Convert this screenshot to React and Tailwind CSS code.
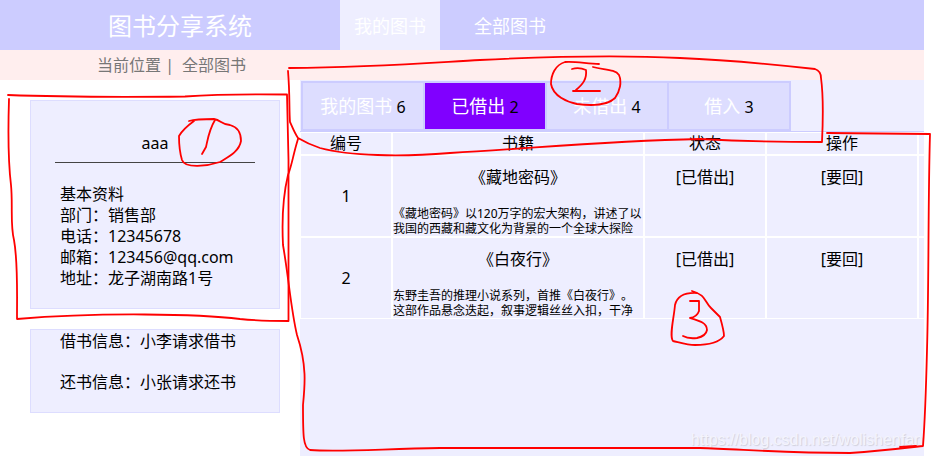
import React, { useState } from 'react';

const navItems = [
  { label: '我的图书', className: 'w-[100px] bg-[#eeeeff]' },
  { label: '全部图书', className: 'w-[140px]' },
];

const tabs = [
  { label: '我的图书', count: 6 },
  { label: '已借出', count: 2 },
  { label: '未借出', count: 4 },
  { label: '借入', count: 3 },
];

const profile = ['基本资料', '部门：销售部', '电话：12345678', '邮箱：123456@qq.com', '地址：龙子湖南路1号'];

const books = [
  {
    id: 1,
    title: '《藏地密码》',
    intro: '《藏地密码》以120万字的宏大架构，讲述了以我国的西藏和藏文化为背景的一个全球大探险',
  },
  {
    id: 2,
    title: '《白夜行》',
    intro: '东野圭吾的推理小说系列，首推《白夜行》。这部作品悬念迭起，叙事逻辑丝丝入扣，干净',
  },
];

// Pen strokes marking the three areas of the page
const frames = [
  'M8 95 C60 97 130 97 185 96.5 C220 94 250 94 287 94.5 L288.5 160 L288.5 321 C262 321 250 320 240 319 C200 314 100 312 17 319 C17 290 18 262 14 240 C10 225 13 205 11 185 C8 160 8 130 9 99',
  'M289 68 C380 67 440 62 480 60 C560 56 620 55 680 58 C730 60 770 64 815 69 Q821 71 821 78 Q824 100 822 142 C770 142 740 141 700 139 C600 141 540 148 450 153 C400 157 350 156 320 148 Q308 144 298 138 C294 132 292 126 290 122 C289 110 290 95 288 71',
  'M298 139 C293 155 292 165 288 175 C282 200 282 225 283 245 C289 280 291 310 297 335 C307 365 305 385 303 405 C303 435 303 448 310 450 C340 452 380 449 440 448 H700 C740 449 780 453 850 453 C880 451 905 448 923 446 C925 420 926 390 927 350 C929 280 928 200 930 134 L827 133',
  'M900 447 L916 446',
];

const marks = [
  // 1
  'M189 121 Q196 119 214 119 C221 120 222 125 230 125 C238 127 241 134 241 141 C239 152 228 157 220 162 C208 166 185 169 182 160 C179 150 179 143 179 136 Q183 129 194 121',
  'M215 120 C209 130 208 138 206 147 L202 154',
  // 2
  'M599 64 C588 64 575 61 565 62 C555 65 551 75 551 84 C553 96 567 102 577 104 C592 106 608 105 615 98 C620 91 622 82 619 75 C615 69 604 70 593 67',
  'M572 69 Q579 67 586 70 C587 79 583 84 576 90',
  'M573 91 H600',
  // 3
  'M692 291 C706 295 704 301 711 308 L720 317 C722 324 724 331 724 336 C718 344 706 345 695 345 C687 345 678 342 673 341 C669 336 674 318 675 305 Q678 292 697 293',
  'M690 301 H699 V311 Q697 317 690 318 C700 321 707 323 707 330 Q706 336 697 338 Q688 339 683 336',
];

const Header = () => (
  <header>
    <div className="flex h-[50px] bg-[#ccccff] text-white">
      <h1 className="w-[340px] pl-[108px] text-2xl leading-[52px]">图书分享系统</h1>
      <nav className="flex text-lg">
        {navItems.map((item) => (
          <a key={item.label} href="#" className={`text-center leading-[52px] ${item.className}`}>
            {item.label}
          </a>
        ))}
      </nav>
    </div>
    <div className="flex h-[30px] gap-2 bg-[#ffeeee] pl-[97px] leading-[30px] text-[#777777]">
      <span>当前位置 |</span>
      <span>全部图书</span>
    </div>
  </header>
);

const Sidebar = () => (
  <aside className="flex w-[300px] shrink-0 flex-col gap-5 py-5 pr-5 pl-[30px]">
    <section className="border border-[#ddddff] bg-[#eeeeff] px-6 pt-8 pb-[19px]">
      <h2 className="border-b border-[#444444] pb-2 text-center leading-[21px]">aaa</h2>
      <ul className="mt-[21px] pl-[5px] leading-[21px]">
        {profile.map((line) => (
          <li key={line}>{line}</li>
        ))}
      </ul>
    </section>
    <section className="flex flex-col gap-5 border border-[#ddddff] bg-[#eeeeff] pt-px pb-[19px] pl-[29px] leading-[21px]">
      <p>借书信息：小李请求借书</p>
      <p>还书信息：小张请求还书</p>
    </section>
  </aside>
);

const Tabs = ({ active, onChange }) => (
  <div className="flex border-b border-[#ccccff] pt-px pl-px">
    <div className="flex gap-0.5 border-2 border-[#ccccff] bg-[#ccccff]">
      {tabs.map((tab, i) => (
        <button
          key={tab.label}
          type="button"
          onClick={() => onChange(i)}
          className={`h-[46px] w-[120px] ${i === active ? 'bg-[#8000ff]' : 'bg-[#ddddff]'}`}
        >
          <span className="text-lg text-white">{tab.label}</span> {tab.count}
        </button>
      ))}
    </div>
  </div>
);

const BookTable = () => (
  <table className="w-full table-fixed border-separate border-spacing-0 text-center leading-[21px]">
    <colgroup>
      <col className="w-[92px]" />
      <col className="w-[252px]" />
      <col className="w-[122px]" />
      <col className="w-[152px]" />
      <col />
    </colgroup>
    <thead>
      <tr>
        {['编号', '书籍', '状态', '操作'].map((name) => (
          <th key={name} scope="col" className="border border-white p-0 font-normal">
            {name}
          </th>
        ))}
        <td className="border border-r-0 border-white p-0" />
      </tr>
    </thead>
    <tbody>
      {books.map((book) => (
        <tr key={book.id}>
          <td className="border border-white p-0">{book.id}</td>
          <td className="border border-white p-0">
            <h3 className="pt-[11px]">{book.title}</h3>
            <p className="mt-[18px] h-[30px] overflow-hidden text-left text-xs leading-[15px]">{book.intro}</p>
          </td>
          <td className="border border-white p-0 pt-[11px] align-top">[已借出]</td>
          <td className="border border-white p-0 pt-[11px] align-top">
            <a href="#">[要回]</a>
          </td>
          <td className="border border-r-0 border-white p-0" />
        </tr>
      ))}
    </tbody>
  </table>
);

const App = () => {
  const [active, setActive] = useState(1);

  return (
    <div className="relative min-h-screen overflow-hidden bg-white font-['Noto_Sans','Noto_Sans_CJK_SC',sans-serif] text-base text-black [text-spacing-trim:space-all]">
      <div className="mr-[7px] flex min-h-screen flex-col">
        <Header />
        <div className="flex flex-1">
          <Sidebar />
          <main className="min-w-0 flex-1 bg-[#eeeeff]">
            <Tabs active={active} onChange={setActive} />
            <BookTable />
          </main>
        </div>
      </div>

      <span className="absolute right-2 bottom-1 font-['Liberation_Sans',sans-serif] text-base text-[#f4f4fc] [text-shadow:1px_1px_1px_#d0d0dc]">
        https://blog.csdn.net/wolishenfan
      </span>
      <svg
        className="pointer-events-none absolute top-0 left-0"
        width="931"
        height="456"
        viewBox="0 0 931 456"
        fill="none"
        stroke="#ff0000"
        strokeWidth="1.8"
        strokeLinecap="round"
        strokeLinejoin="round"
        aria-hidden="true"
      >
        {[...frames, ...marks].map((d) => (
          <path key={d} d={d} />
        ))}
      </svg>
    </div>
  );
};

export default App;
